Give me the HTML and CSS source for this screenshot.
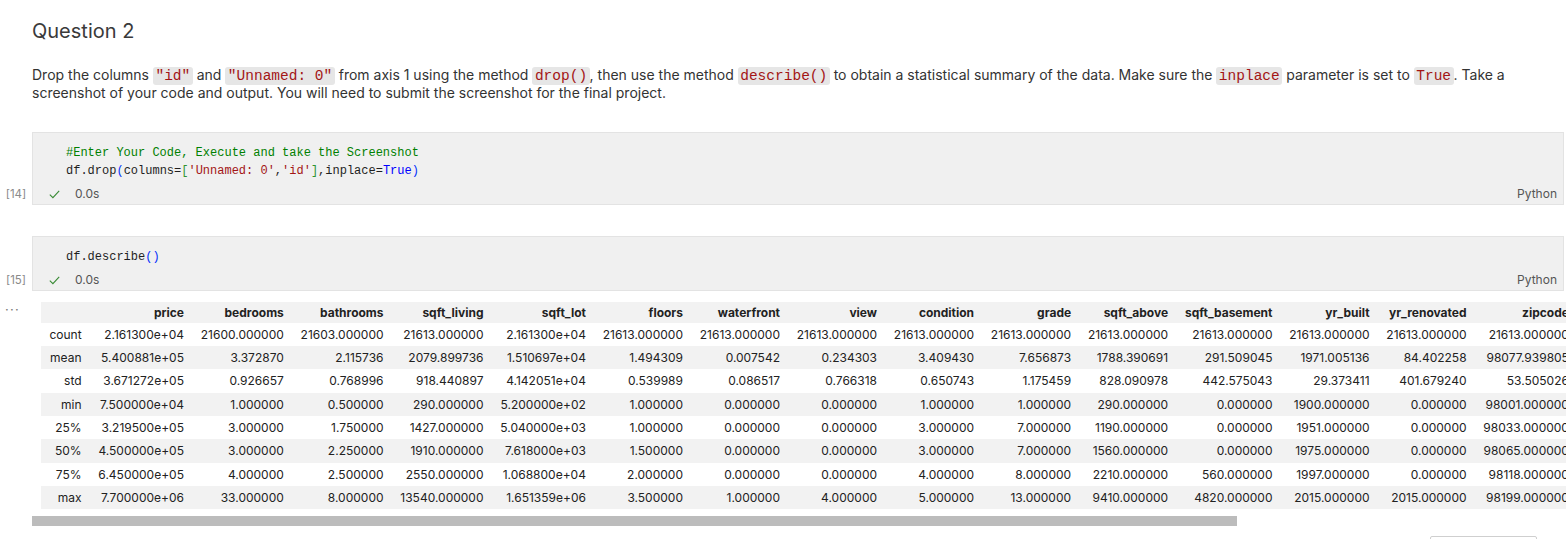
FILE: index.html
```html
<!DOCTYPE html>
<html lang="en">
<head>
<meta charset="utf-8">
<title>Question 2</title>
<link rel="stylesheet" href="styles.css">
</head>
<body>
<main class="notebook">
  <section class="md-cell">
    <h2 class="md-title">Question 2</h2>
    <p class="md-text">Drop the columns <code class="inline">"id"</code> and <code class="inline">"Unnamed: 0"</code> from axis 1 using the method <code class="inline">drop()</code>, then use the method <code class="inline">describe()</code> to obtain a statistical summary of the data. Make sure the <code class="inline">inplace</code> parameter is set to <code class="inline">True</code>. Take a screenshot of your code and output. You will need to submit the screenshot for the final project.</p>
  </section>

  <section class="code-cell first">
    <div class="gutter"><span class="exec-count">[14]</span></div>
    <div class="cell-box">
      <pre class="code"><span class="tok-comment">#Enter Your Code, Execute and take the Screenshot</span>
df.drop<span class="tok-b1">(</span>columns=<span class="tok-b2">[</span><span class="tok-str">'Unnamed: 0'</span>,<span class="tok-str">'id'</span><span class="tok-b2">]</span>,inplace=<span class="tok-kw">True</span><span class="tok-b1">)</span></pre>
      <div class="status">
        <svg class="check" width="11" height="9" viewBox="0 0 11 9"><path d="M0.8 4.6 L3.9 7.7 L10.2 0.9" fill="none" stroke="#388a34" stroke-width="1.1"/></svg>
        <span class="time">0.0s</span>
        <span class="lang">Python</span>
      </div>
    </div>
  </section>

  <section class="code-cell">
    <div class="gutter"><span class="exec-count">[15]</span></div>
    <div class="cell-box">
      <pre class="code">df.describe<span class="tok-b1">()</span></pre>
      <div class="status">
        <svg class="check" width="11" height="9" viewBox="0 0 11 9"><path d="M0.8 4.6 L3.9 7.7 L10.2 0.9" fill="none" stroke="#388a34" stroke-width="1.1"/></svg>
        <span class="time">0.0s</span>
        <span class="lang">Python</span>
      </div>
    </div>
  </section>

  <section class="output">
    <div class="gutter out-gutter"><span class="more">···</span></div>
    <div class="output-body">
      <div class="table-scroll">
        <table class="df">
          <thead>
            <tr><th></th><th>price</th><th>bedrooms</th><th>bathrooms</th><th>sqft_living</th><th>sqft_lot</th><th>floors</th><th>waterfront</th><th>view</th><th>condition</th><th>grade</th><th>sqft_above</th><th>sqft_basement</th><th>yr_built</th><th>yr_renovated</th><th>zipcode</th><th>lat</th><th>long</th><th>sqft_living15</th><th>sqft_lot15</th></tr>
          </thead>
          <tbody>
            <tr><th>count</th><td>2.161300e+04</td><td>21600.000000</td><td>21603.000000</td><td>21613.000000</td><td>2.161300e+04</td><td>21613.000000</td><td>21613.000000</td><td>21613.000000</td><td>21613.000000</td><td>21613.000000</td><td>21613.000000</td><td>21613.000000</td><td>21613.000000</td><td>21613.000000</td><td>21613.000000</td><td>21613.000000</td><td>21613.000000</td><td>21613.000000</td><td>21613.000000</td></tr>
            <tr><th>mean</th><td>5.400881e+05</td><td>3.372870</td><td>2.115736</td><td>2079.899736</td><td>1.510697e+04</td><td>1.494309</td><td>0.007542</td><td>0.234303</td><td>3.409430</td><td>7.656873</td><td>1788.390691</td><td>291.509045</td><td>1971.005136</td><td>84.402258</td><td>98077.939805</td><td>47.560053</td><td>-122.213896</td><td>1986.552492</td><td>12768.455652</td></tr>
            <tr><th>std</th><td>3.671272e+05</td><td>0.926657</td><td>0.768996</td><td>918.440897</td><td>4.142051e+04</td><td>0.539989</td><td>0.086517</td><td>0.766318</td><td>0.650743</td><td>1.175459</td><td>828.090978</td><td>442.575043</td><td>29.373411</td><td>401.679240</td><td>53.505026</td><td>0.138564</td><td>0.140828</td><td>685.391304</td><td>27304.179631</td></tr>
            <tr><th>min</th><td>7.500000e+04</td><td>1.000000</td><td>0.500000</td><td>290.000000</td><td>5.200000e+02</td><td>1.000000</td><td>0.000000</td><td>0.000000</td><td>1.000000</td><td>1.000000</td><td>290.000000</td><td>0.000000</td><td>1900.000000</td><td>0.000000</td><td>98001.000000</td><td>47.155900</td><td>-122.519000</td><td>399.000000</td><td>651.000000</td></tr>
            <tr><th>25%</th><td>3.219500e+05</td><td>3.000000</td><td>1.750000</td><td>1427.000000</td><td>5.040000e+03</td><td>1.000000</td><td>0.000000</td><td>0.000000</td><td>3.000000</td><td>7.000000</td><td>1190.000000</td><td>0.000000</td><td>1951.000000</td><td>0.000000</td><td>98033.000000</td><td>47.471000</td><td>-122.328000</td><td>1490.000000</td><td>5100.000000</td></tr>
            <tr><th>50%</th><td>4.500000e+05</td><td>3.000000</td><td>2.250000</td><td>1910.000000</td><td>7.618000e+03</td><td>1.500000</td><td>0.000000</td><td>0.000000</td><td>3.000000</td><td>7.000000</td><td>1560.000000</td><td>0.000000</td><td>1975.000000</td><td>0.000000</td><td>98065.000000</td><td>47.571800</td><td>-122.230000</td><td>1840.000000</td><td>7620.000000</td></tr>
            <tr><th>75%</th><td>6.450000e+05</td><td>4.000000</td><td>2.500000</td><td>2550.000000</td><td>1.068800e+04</td><td>2.000000</td><td>0.000000</td><td>0.000000</td><td>4.000000</td><td>8.000000</td><td>2210.000000</td><td>560.000000</td><td>1997.000000</td><td>0.000000</td><td>98118.000000</td><td>47.678000</td><td>-122.125000</td><td>2360.000000</td><td>10083.000000</td></tr>
            <tr><th>max</th><td>7.700000e+06</td><td>33.000000</td><td>8.000000</td><td>13540.000000</td><td>1.651359e+06</td><td>3.500000</td><td>1.000000</td><td>4.000000</td><td>5.000000</td><td>13.000000</td><td>9410.000000</td><td>4820.000000</td><td>2015.000000</td><td>2015.000000</td><td>98199.000000</td><td>47.777600</td><td>-121.315000</td><td>6210.000000</td><td>871200.000000</td></tr>
          </tbody>
        </table>
      </div>
      <div class="scrollbar"><div class="thumb"></div></div>
    </div>
  </section>

  <div class="footer"><div class="ghost-btn"></div></div>
</main>
</body>
</html>
```

FILE: styles.css
```css
html, body {
  margin: 0;
  padding: 0;
  background: #ffffff;
  overflow: hidden;
}

body {
  font-family: Inter, "Liberation Sans", Arial, sans-serif;
  color: #333333;
  width: 1566px;
}

.notebook {
  display: flex;
  flex-direction: column;
}

/* Markdown cell */
.md-cell {
  padding: 18px 0 0 32px;
}

.md-title {
  margin: 0;
  font-size: 20px;
  line-height: 26px;
  font-weight: normal;
  color: #3a3a3a;
}

.md-text {
  margin: 22px 0 0 0;
  width: 1532px;
  font-size: 14px;
  line-height: 17px;
  color: #333333;
}

.inline {
  font-family: "Liberation Mono", "DejaVu Sans Mono", monospace;
  font-size: 14.5px;
  line-height: 1;
  color: #a31515;
  background: #e6e6e6;
  border-radius: 3px;
  padding: 1px 2.5px;
}

/* Code cells */
.code-cell {
  display: flex;
  margin-top: 31px;
}

.gutter {
  width: 32px;
  flex: 0 0 32px;
  display: flex;
  flex-direction: column;
  justify-content: flex-end;
  align-items: center;
  padding-bottom: 2px;
  box-sizing: border-box;
}

.exec-count {
  font-size: 11.5px;
  line-height: 18px;
  color: #8a8a8a;
}

.cell-box {
  flex: 1;
  margin-right: 2px;
  background: #f0f0f0;
  border: 1px solid #e3e3e3;
  padding: 11px 6px 1px 16px;
}

.code {
  margin: 0 0 0 17px;
  font-family: "Liberation Mono", "DejaVu Sans Mono", monospace;
  font-size: 12px;
  line-height: 18px;
  color: #1f1f1f;
}

.tok-comment { color: #008000; }
.tok-str { color: #a31515; }
.tok-kw { color: #0000ff; }
.tok-b1 { color: #0431fa; }
.tok-b2 { color: #319331; }

.status {
  display: flex;
  align-items: center;
  height: 18px;
  margin-top: 5px;
  font-size: 12px;
}

.check {
  display: block;
  margin-top: 1px;
}

.time {
  margin-left: 15px;
  color: #555555;
}

.lang {
  margin-left: auto;
  color: #555555;
  font-size: 12px;
}

/* Output */
.output {
  display: flex;
  margin-top: 11px;
}

.out-gutter {
  justify-content: flex-start;
  align-items: flex-start;
  padding: 0 0 0 5px;
}

.more {
  font-size: 13px;
  line-height: 12px;
  letter-spacing: 1.3px;
  color: #777777;
  margin-top: 1px;
}

.output-body {
  flex: 1;
  min-width: 0;
}

.table-scroll {
  overflow: hidden;
  padding-left: 9px;
}

.df {
  border-collapse: collapse;
  font-size: 12px;
  color: #222222;
  white-space: nowrap;
}

.df th,
.df td {
  text-align: right;
  padding: 4px 8.4px;
  line-height: 15.3px;
}

.df thead th {
  font-weight: 700;
  padding-top: 3px;
  padding-bottom: 3px;
}

.df tbody th {
  font-weight: normal;
}

.df thead tr,
.df tbody tr:nth-child(even) {
  background: #f2f2f2;
}

.scrollbar {
  margin-top: 7px;
  height: 10px;
}

.thumb {
  width: 1205px;
  height: 10px;
  background: #bcbcbc;
}

.footer {
  display: flex;
  justify-content: flex-end;
  padding-right: 29px;
  margin-top: 10px;
}

.ghost-btn {
  width: 105px;
  height: 28px;
  border: 1px solid #cfcfcf;
  border-radius: 2px;
}
```
